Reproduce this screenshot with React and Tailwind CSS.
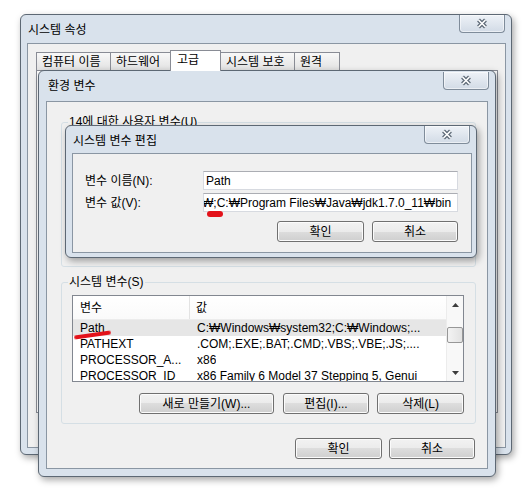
import React from "react";

function CloseButton({ className }) {
  return (
    <div
      className={
        "flex w-[46px] items-center justify-center rounded-b-[4px] border border-t-0 border-[#7f8c9a] bg-[linear-gradient(#eef2f7,#d2dbe6)] shadow-[inset_0_0_0_1px_rgba(255,255,255,0.55)] " +
        className
      }
    >
      <svg width="14" height="11" viewBox="0 0 14 11">
        <path d="M3.5 2 L10.5 9 M10.5 2 L3.5 9" stroke="#5f6b78" strokeWidth="4" />
        <path d="M3.5 2 L10.5 9 M10.5 2 L3.5 9" stroke="#ffffff" strokeWidth="1.6" />
      </svg>
    </div>
  );
}

function Btn({ children, className }) {
  return (
    <div
      className={
        "flex h-[21px] items-center justify-center rounded-[3px] border border-[#707070] bg-[linear-gradient(#f2f2f2_0%,#ebebeb_50%,#dddddd_50%,#cfcfcf_100%)] text-[12px] leading-4 text-black shadow-[inset_0_0_0_1px_#fbfbfb] " +
        className
      }
    >
      {children}
    </div>
  );
}

function Win({ className, title, barClass, titleClass, closeClass, contentClass, children }) {
  return (
    <div
      className={
        "absolute flex flex-col rounded-[6px] border border-[#5d6874] bg-[#d9e2ec] shadow-[2px_3px_7px_rgba(0,0,0,0.35)] " +
        className
      }
    >
      <div className={"flex shrink-0 justify-between " + barClass}>
        <span className={"text-[12px] leading-4 text-black " + titleClass}>{title}</span>
        <CloseButton className={closeClass} />
      </div>
      <div className={"shrink-0 border border-[#8a96a3] bg-[#f0f0f0] " + contentClass}>{children}</div>
    </div>
  );
}

function UpArrow() {
  return (
    <svg width="7" height="4" viewBox="0 0 7 4">
      <path d="M3.5 0 L7 4 L0 4 Z" fill="#3c3c3c" />
    </svg>
  );
}
function DownArrow() {
  return (
    <svg width="7" height="4" viewBox="0 0 7 4">
      <path d="M0 0 L7 0 L3.5 4 Z" fill="#3c3c3c" />
    </svg>
  );
}

const rows = [
  ["Path", "C:₩Windows₩system32;C:₩Windows;...", true],
  ["PATHEXT", ".COM;.EXE;.BAT;.CMD;.VBS;.VBE;.JS;....", false],
  ["PROCESSOR_A...", "x86", false],
  ["PROCESSOR_ID", "x86 Family 6 Model 37 Stepping 5, Genui", false],
];

export default function App() {
  return (
    <div className="relative h-[491px] w-[525px] overflow-hidden bg-white font-['Liberation_Sans','Noto_Sans_CJK_KR',sans-serif] text-[12px] text-black">
      {/* 시스템 속성 */}
      <Win
        className="left-[20px] top-[14px] h-[441px] w-[492px]"
        title="시스템 속성"
        barClass="h-[28px]"
        titleClass="ml-[7px] mt-[7px]"
        closeClass="mr-[6px] h-[18px]"
        contentClass="ml-[6px] mr-[5px] h-[405px] flex flex-col pl-[8px] pr-[7px] pt-[6px]"
      >
        <div className="flex h-[20px] items-end">
          <div className="flex h-[18px] w-[75px] items-center border border-b-0 border-[#898c95] bg-[linear-gradient(#f8f8f8,#e2e2e2)] pl-[5px] leading-4">
            컴퓨터 이름
          </div>
          <div className="-ml-px flex h-[18px] w-[61px] items-center border border-b-0 border-[#898c95] bg-[linear-gradient(#f8f8f8,#e2e2e2)] pl-[5px] leading-4">
            하드웨어
          </div>
          <div className="relative z-10 -mb-px -ml-px flex h-[21px] w-[51px] items-start border border-b-0 border-[#898c95] bg-white pl-[6px] pt-[1px] leading-4">
            고급
          </div>
          <div className="-ml-px flex h-[18px] w-[75px] items-center border border-b-0 border-[#898c95] bg-[linear-gradient(#f8f8f8,#e2e2e2)] pl-[5px] leading-4">
            시스템 보호
          </div>
          <div className="-ml-px flex h-[18px] w-[46px] items-center border border-b-0 border-[#898c95] bg-[linear-gradient(#f8f8f8,#e2e2e2)] pl-[5px] leading-4">
            원격
          </div>
        </div>
        <div className="h-[343px] border border-[#898c95] bg-white" />
      </Win>

      {/* 환경 변수 */}
      <Win
        className="left-[38px] top-[70px] h-[407px] w-[458px]"
        title="환경 변수"
        barClass="h-[30px]"
        titleClass="ml-[9px] mt-[7px]"
        closeClass="mr-[6px] mt-[1px] h-[18px]"
        contentClass="mx-[7px] h-[368px] flex flex-col pl-[14px] pr-[11px] pt-[20px]"
      >
        <div className="relative h-[145px] rounded-[3px] border border-[#d5dfe5]">
          <span className="absolute -top-[9px] left-[6px] bg-[#f0f0f0] px-px leading-4">
            14에 대한 사용자 변수(U)
          </span>
        </div>
        <div className="relative mt-[15px] flex h-[142px] flex-col rounded-[3px] border border-[#d5dfe5] pl-[10px] pr-[11px] pt-[12px]">
          <span className="absolute -top-[9px] left-[6px] bg-[#f0f0f0] px-px leading-4">
            시스템 변수(S)
          </span>
          <div className="flex h-[87px] border border-[#828790] bg-white">
            <div className="flex min-w-0 flex-1 flex-col overflow-hidden">
              <div className="flex h-[24px] shrink-0 items-center border-b border-[#ececec] bg-[linear-gradient(#ffffff,#fafafa)]">
                <div className="flex h-full w-[117px] items-center border-r border-[#e3e3e3] pl-[7px]">변수</div>
                <div className="pl-[6px]">값</div>
              </div>
              {rows.map(([n, v, sel]) => (
                <div
                  key={n}
                  className={
                    sel
                      ? "flex h-[16px] shrink-0 items-center whitespace-nowrap bg-[#e6e6e6]"
                      : "flex h-[16px] shrink-0 items-center whitespace-nowrap"
                  }
                >
                  <div className="w-[117px] shrink-0 overflow-hidden pl-[7px] leading-4">{n}</div>
                  <div className="overflow-hidden pl-[7px] leading-4">{v}</div>
                </div>
              ))}
            </div>
            <div className="flex w-[17px] shrink-0 flex-col border-l border-[#ececec] bg-[#f8f8f8]">
              <div className="flex h-[17px] items-center justify-center">
                <UpArrow />
              </div>
              <div className="flex-1">
                <div className="mt-[14px] h-[16px] rounded-[2px] border border-[#979797] bg-[linear-gradient(90deg,#f3f3f3,#e2e2e2)]" />
              </div>
              <div className="flex h-[17px] items-center justify-center">
                <DownArrow />
              </div>
            </div>
          </div>
          <div className="mt-[11px] flex justify-end">
            <Btn className="w-[135px]">새로 만들기(W)...</Btn>
            <Btn className="ml-[9px] w-[86px]">편집(I)...</Btn>
            <Btn className="ml-[8px] w-[87px]">삭제(L)</Btn>
          </div>
        </div>
        <div className="mt-[14px] flex justify-end pr-px">
          <Btn className="w-[87px]">확인</Btn>
          <Btn className="ml-[7px] w-[86px]">취소</Btn>
        </div>
      </Win>

      {/* 시스템 변수 편집 */}
      <Win
        className="left-[65px] top-[125px] h-[133px] w-[412px]"
        title="시스템 변수 편집"
        barClass="h-[27px]"
        titleClass="ml-[7px] mt-[7px]"
        closeClass="mr-[6px] h-[18px]"
        contentClass="ml-[6px] mr-[4px] h-[100px] flex flex-col pl-[12px] pr-[13px] pt-[17px]"
      >
        <div className="flex h-[19px] items-center">
          <div className="w-[118px] leading-4">변수 이름(N):</div>
          <div className="flex h-[19px] flex-1 items-center border border-[#d7dae0] border-t-[#abadb3] bg-white pl-[2px] leading-4">
            Path
          </div>
        </div>
        <div className="mt-[3px] flex h-[19px] items-center">
          <div className="w-[118px] leading-4">변수 값(V):</div>
          <div className="flex h-[19px] min-w-0 flex-1 items-center overflow-hidden whitespace-nowrap border border-[#d7dae0] border-t-[#abadb3] bg-white leading-4">
            <span className="-ml-[2px]">₩;C:₩Program Files₩Java₩jdk1.7.0_11₩bin</span>
          </div>
        </div>
        <div className="mt-[9px] flex justify-end">
          <Btn className="w-[87px]">확인</Btn>
          <Btn className="ml-[8px] w-[86px]">취소</Btn>
        </div>
      </Win>

      {/* red annotation marks */}
      <div className="absolute left-[207px] top-[211px] h-[6px] w-[16px] rounded-full bg-[#e3121a] blur-[0.7px]" />
      <div className="absolute left-[74px] top-[333px] h-[4px] w-[37px] -rotate-[8deg] rounded-full bg-[#e3121a] blur-[0.6px]" />
    </div>
  );
}
